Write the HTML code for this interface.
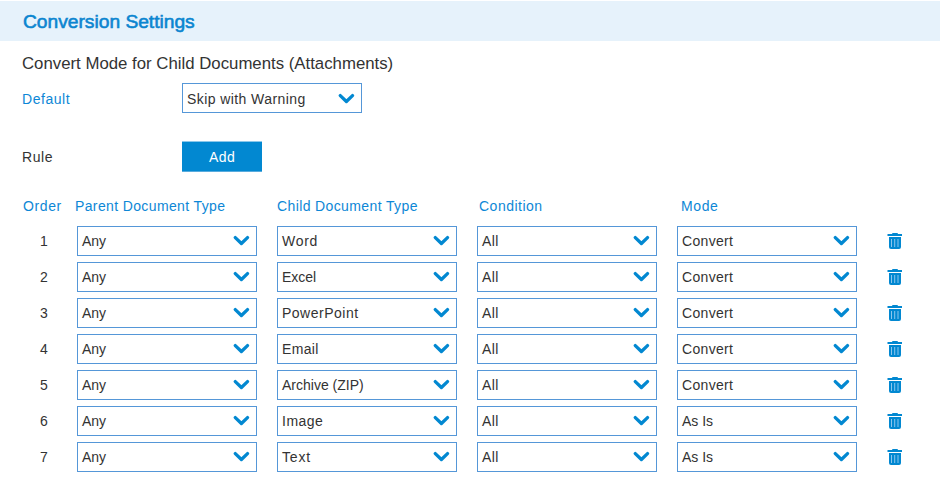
<!DOCTYPE html>
<html><head><meta charset="utf-8">
<style>
html,body{margin:0;padding:0;background:#fff;width:940px;height:478px;overflow:hidden;position:relative;font-family:"Liberation Sans",sans-serif;}
.a{position:absolute;white-space:nowrap;}
.band{position:absolute;left:0;top:1px;width:940px;height:40px;background:#e6f2fb;}
.title{left:23px;top:11px;font-size:19.2px;line-height:22px;font-weight:normal;-webkit-text-stroke:0.6px #0b85d0;color:#0b85d0;}
.sub{left:22px;top:54px;font-size:16.8px;line-height:20px;color:#333;}
.lbl{font-size:14px;line-height:16px;color:#0d87d6;}
.dark{font-size:14px;line-height:16px;color:#333;}
.sel{position:absolute;box-sizing:border-box;width:180px;height:30px;border:1px solid #5597d8;background:#fff;}
.sel span{position:absolute;left:4px;top:6px;font-size:14px;line-height:16px;color:#333;white-space:nowrap;}
.sel svg{position:absolute;left:155px;top:8px;}
.btn{position:absolute;box-sizing:border-box;left:182px;top:141px;width:80px;height:31px;border-top:1px solid #8cc8ea;border-bottom:1px solid #58abdd;background:#0288d1;color:#fff;font-size:14px;line-height:16px;}
.btn span{position:absolute;left:27px;top:7px;letter-spacing:0.5px;}
.num{position:absolute;font-size:14px;line-height:16px;color:#333;width:20px;text-align:center;}
.trash{position:absolute;left:887px;}
</style></head><body>
<div class="band"></div>
<div class="a title">Conversion Settings</div>
<div class="a sub">Convert Mode for Child Documents (Attachments)</div>
<div class="a lbl" style="left:22px;top:91px;letter-spacing:0.55px;">Default</div>
<div class="sel" style="left:182px;top:83px;"><span style="letter-spacing:0.42px;top:7px">Skip with Warning</span><svg style="top:9px" width="20" height="14" viewBox="0 0 20 14"><polyline points="2.3,2.6 8.4,8.5 14.5,2.6" fill="none" stroke="#0288d1" stroke-width="3.3" stroke-linecap="round" stroke-linejoin="round"/></svg></div>
<div class="a dark" style="left:22px;top:149px;letter-spacing:0.6px;">Rule</div>
<div class="btn"><span>Add</span></div>
<div class="a lbl" style="left:23px;top:198px;letter-spacing:0.6px;">Order</div>
<div class="a lbl" style="left:75px;top:198px;letter-spacing:0.37px;">Parent Document Type</div>
<div class="a lbl" style="left:277px;top:198px;letter-spacing:0.38px;">Child Document Type</div>
<div class="a lbl" style="left:479px;top:198px;letter-spacing:0.5px;">Condition</div>
<div class="a lbl" style="left:681px;top:198px;letter-spacing:0.6px;">Mode</div>
<div class="num" style="left:34px;top:233px;">1</div>
<div class="sel" style="left:77px;top:226px;"><span>Any</span><svg width="20" height="14" viewBox="0 0 20 14"><polyline points="2.3,2.6 8.4,8.5 14.5,2.6" fill="none" stroke="#0288d1" stroke-width="3.3" stroke-linecap="round" stroke-linejoin="round"/></svg></div>
<div class="sel" style="left:277px;top:226px;"><span style="letter-spacing:0.7px">Word</span><svg width="20" height="14" viewBox="0 0 20 14"><polyline points="2.3,2.6 8.4,8.5 14.5,2.6" fill="none" stroke="#0288d1" stroke-width="3.3" stroke-linecap="round" stroke-linejoin="round"/></svg></div>
<div class="sel" style="left:477px;top:226px;"><span style="letter-spacing:0.4px">All</span><svg width="20" height="14" viewBox="0 0 20 14"><polyline points="2.3,2.6 8.4,8.5 14.5,2.6" fill="none" stroke="#0288d1" stroke-width="3.3" stroke-linecap="round" stroke-linejoin="round"/></svg></div>
<div class="sel" style="left:677px;top:226px;"><span style="letter-spacing:0.33px">Convert</span><svg width="20" height="14" viewBox="0 0 20 14"><polyline points="2.3,2.6 8.4,8.5 14.5,2.6" fill="none" stroke="#0288d1" stroke-width="3.3" stroke-linecap="round" stroke-linejoin="round"/></svg></div>
<svg class="trash" style="top:233px" width="16" height="17" viewBox="0 0 16 17"><rect x="5" y="0" width="6" height="2" rx="1" fill="#0288d1"/><rect x="0.5" y="1" width="14.5" height="2" fill="#0288d1"/><path d="M2 4 H14 V14 Q14 16 12 16 H4 Q2 16 2 14 Z" fill="#0288d1"/><rect x="4" y="6" width="1" height="8" fill="#8cc6ee"/><rect x="7.2" y="6" width="1" height="8" fill="#8cc6ee"/><rect x="10.5" y="6" width="1" height="8" fill="#8cc6ee"/></svg>
<div class="num" style="left:34px;top:269px;">2</div>
<div class="sel" style="left:77px;top:262px;"><span>Any</span><svg width="20" height="14" viewBox="0 0 20 14"><polyline points="2.3,2.6 8.4,8.5 14.5,2.6" fill="none" stroke="#0288d1" stroke-width="3.3" stroke-linecap="round" stroke-linejoin="round"/></svg></div>
<div class="sel" style="left:277px;top:262px;"><span>Excel</span><svg width="20" height="14" viewBox="0 0 20 14"><polyline points="2.3,2.6 8.4,8.5 14.5,2.6" fill="none" stroke="#0288d1" stroke-width="3.3" stroke-linecap="round" stroke-linejoin="round"/></svg></div>
<div class="sel" style="left:477px;top:262px;"><span style="letter-spacing:0.4px">All</span><svg width="20" height="14" viewBox="0 0 20 14"><polyline points="2.3,2.6 8.4,8.5 14.5,2.6" fill="none" stroke="#0288d1" stroke-width="3.3" stroke-linecap="round" stroke-linejoin="round"/></svg></div>
<div class="sel" style="left:677px;top:262px;"><span style="letter-spacing:0.33px">Convert</span><svg width="20" height="14" viewBox="0 0 20 14"><polyline points="2.3,2.6 8.4,8.5 14.5,2.6" fill="none" stroke="#0288d1" stroke-width="3.3" stroke-linecap="round" stroke-linejoin="round"/></svg></div>
<svg class="trash" style="top:269px" width="16" height="17" viewBox="0 0 16 17"><rect x="5" y="0" width="6" height="2" rx="1" fill="#0288d1"/><rect x="0.5" y="1" width="14.5" height="2" fill="#0288d1"/><path d="M2 4 H14 V14 Q14 16 12 16 H4 Q2 16 2 14 Z" fill="#0288d1"/><rect x="4" y="6" width="1" height="8" fill="#8cc6ee"/><rect x="7.2" y="6" width="1" height="8" fill="#8cc6ee"/><rect x="10.5" y="6" width="1" height="8" fill="#8cc6ee"/></svg>
<div class="num" style="left:34px;top:305px;">3</div>
<div class="sel" style="left:77px;top:298px;"><span>Any</span><svg width="20" height="14" viewBox="0 0 20 14"><polyline points="2.3,2.6 8.4,8.5 14.5,2.6" fill="none" stroke="#0288d1" stroke-width="3.3" stroke-linecap="round" stroke-linejoin="round"/></svg></div>
<div class="sel" style="left:277px;top:298px;"><span style="letter-spacing:0.5px">PowerPoint</span><svg width="20" height="14" viewBox="0 0 20 14"><polyline points="2.3,2.6 8.4,8.5 14.5,2.6" fill="none" stroke="#0288d1" stroke-width="3.3" stroke-linecap="round" stroke-linejoin="round"/></svg></div>
<div class="sel" style="left:477px;top:298px;"><span style="letter-spacing:0.4px">All</span><svg width="20" height="14" viewBox="0 0 20 14"><polyline points="2.3,2.6 8.4,8.5 14.5,2.6" fill="none" stroke="#0288d1" stroke-width="3.3" stroke-linecap="round" stroke-linejoin="round"/></svg></div>
<div class="sel" style="left:677px;top:298px;"><span style="letter-spacing:0.33px">Convert</span><svg width="20" height="14" viewBox="0 0 20 14"><polyline points="2.3,2.6 8.4,8.5 14.5,2.6" fill="none" stroke="#0288d1" stroke-width="3.3" stroke-linecap="round" stroke-linejoin="round"/></svg></div>
<svg class="trash" style="top:305px" width="16" height="17" viewBox="0 0 16 17"><rect x="5" y="0" width="6" height="2" rx="1" fill="#0288d1"/><rect x="0.5" y="1" width="14.5" height="2" fill="#0288d1"/><path d="M2 4 H14 V14 Q14 16 12 16 H4 Q2 16 2 14 Z" fill="#0288d1"/><rect x="4" y="6" width="1" height="8" fill="#8cc6ee"/><rect x="7.2" y="6" width="1" height="8" fill="#8cc6ee"/><rect x="10.5" y="6" width="1" height="8" fill="#8cc6ee"/></svg>
<div class="num" style="left:34px;top:341px;">4</div>
<div class="sel" style="left:77px;top:334px;"><span>Any</span><svg width="20" height="14" viewBox="0 0 20 14"><polyline points="2.3,2.6 8.4,8.5 14.5,2.6" fill="none" stroke="#0288d1" stroke-width="3.3" stroke-linecap="round" stroke-linejoin="round"/></svg></div>
<div class="sel" style="left:277px;top:334px;"><span style="letter-spacing:0.35px">Email</span><svg width="20" height="14" viewBox="0 0 20 14"><polyline points="2.3,2.6 8.4,8.5 14.5,2.6" fill="none" stroke="#0288d1" stroke-width="3.3" stroke-linecap="round" stroke-linejoin="round"/></svg></div>
<div class="sel" style="left:477px;top:334px;"><span style="letter-spacing:0.4px">All</span><svg width="20" height="14" viewBox="0 0 20 14"><polyline points="2.3,2.6 8.4,8.5 14.5,2.6" fill="none" stroke="#0288d1" stroke-width="3.3" stroke-linecap="round" stroke-linejoin="round"/></svg></div>
<div class="sel" style="left:677px;top:334px;"><span style="letter-spacing:0.33px">Convert</span><svg width="20" height="14" viewBox="0 0 20 14"><polyline points="2.3,2.6 8.4,8.5 14.5,2.6" fill="none" stroke="#0288d1" stroke-width="3.3" stroke-linecap="round" stroke-linejoin="round"/></svg></div>
<svg class="trash" style="top:341px" width="16" height="17" viewBox="0 0 16 17"><rect x="5" y="0" width="6" height="2" rx="1" fill="#0288d1"/><rect x="0.5" y="1" width="14.5" height="2" fill="#0288d1"/><path d="M2 4 H14 V14 Q14 16 12 16 H4 Q2 16 2 14 Z" fill="#0288d1"/><rect x="4" y="6" width="1" height="8" fill="#8cc6ee"/><rect x="7.2" y="6" width="1" height="8" fill="#8cc6ee"/><rect x="10.5" y="6" width="1" height="8" fill="#8cc6ee"/></svg>
<div class="num" style="left:34px;top:377px;">5</div>
<div class="sel" style="left:77px;top:370px;"><span>Any</span><svg width="20" height="14" viewBox="0 0 20 14"><polyline points="2.3,2.6 8.4,8.5 14.5,2.6" fill="none" stroke="#0288d1" stroke-width="3.3" stroke-linecap="round" stroke-linejoin="round"/></svg></div>
<div class="sel" style="left:277px;top:370px;"><span>Archive (ZIP)</span><svg width="20" height="14" viewBox="0 0 20 14"><polyline points="2.3,2.6 8.4,8.5 14.5,2.6" fill="none" stroke="#0288d1" stroke-width="3.3" stroke-linecap="round" stroke-linejoin="round"/></svg></div>
<div class="sel" style="left:477px;top:370px;"><span style="letter-spacing:0.4px">All</span><svg width="20" height="14" viewBox="0 0 20 14"><polyline points="2.3,2.6 8.4,8.5 14.5,2.6" fill="none" stroke="#0288d1" stroke-width="3.3" stroke-linecap="round" stroke-linejoin="round"/></svg></div>
<div class="sel" style="left:677px;top:370px;"><span style="letter-spacing:0.33px">Convert</span><svg width="20" height="14" viewBox="0 0 20 14"><polyline points="2.3,2.6 8.4,8.5 14.5,2.6" fill="none" stroke="#0288d1" stroke-width="3.3" stroke-linecap="round" stroke-linejoin="round"/></svg></div>
<svg class="trash" style="top:377px" width="16" height="17" viewBox="0 0 16 17"><rect x="5" y="0" width="6" height="2" rx="1" fill="#0288d1"/><rect x="0.5" y="1" width="14.5" height="2" fill="#0288d1"/><path d="M2 4 H14 V14 Q14 16 12 16 H4 Q2 16 2 14 Z" fill="#0288d1"/><rect x="4" y="6" width="1" height="8" fill="#8cc6ee"/><rect x="7.2" y="6" width="1" height="8" fill="#8cc6ee"/><rect x="10.5" y="6" width="1" height="8" fill="#8cc6ee"/></svg>
<div class="num" style="left:34px;top:413px;">6</div>
<div class="sel" style="left:77px;top:406px;"><span>Any</span><svg width="20" height="14" viewBox="0 0 20 14"><polyline points="2.3,2.6 8.4,8.5 14.5,2.6" fill="none" stroke="#0288d1" stroke-width="3.3" stroke-linecap="round" stroke-linejoin="round"/></svg></div>
<div class="sel" style="left:277px;top:406px;"><span style="letter-spacing:0.5px">Image</span><svg width="20" height="14" viewBox="0 0 20 14"><polyline points="2.3,2.6 8.4,8.5 14.5,2.6" fill="none" stroke="#0288d1" stroke-width="3.3" stroke-linecap="round" stroke-linejoin="round"/></svg></div>
<div class="sel" style="left:477px;top:406px;"><span style="letter-spacing:0.4px">All</span><svg width="20" height="14" viewBox="0 0 20 14"><polyline points="2.3,2.6 8.4,8.5 14.5,2.6" fill="none" stroke="#0288d1" stroke-width="3.3" stroke-linecap="round" stroke-linejoin="round"/></svg></div>
<div class="sel" style="left:677px;top:406px;"><span>As Is</span><svg width="20" height="14" viewBox="0 0 20 14"><polyline points="2.3,2.6 8.4,8.5 14.5,2.6" fill="none" stroke="#0288d1" stroke-width="3.3" stroke-linecap="round" stroke-linejoin="round"/></svg></div>
<svg class="trash" style="top:413px" width="16" height="17" viewBox="0 0 16 17"><rect x="5" y="0" width="6" height="2" rx="1" fill="#0288d1"/><rect x="0.5" y="1" width="14.5" height="2" fill="#0288d1"/><path d="M2 4 H14 V14 Q14 16 12 16 H4 Q2 16 2 14 Z" fill="#0288d1"/><rect x="4" y="6" width="1" height="8" fill="#8cc6ee"/><rect x="7.2" y="6" width="1" height="8" fill="#8cc6ee"/><rect x="10.5" y="6" width="1" height="8" fill="#8cc6ee"/></svg>
<div class="num" style="left:34px;top:449px;">7</div>
<div class="sel" style="left:77px;top:442px;"><span>Any</span><svg width="20" height="14" viewBox="0 0 20 14"><polyline points="2.3,2.6 8.4,8.5 14.5,2.6" fill="none" stroke="#0288d1" stroke-width="3.3" stroke-linecap="round" stroke-linejoin="round"/></svg></div>
<div class="sel" style="left:277px;top:442px;"><span style="letter-spacing:0.8px">Text</span><svg width="20" height="14" viewBox="0 0 20 14"><polyline points="2.3,2.6 8.4,8.5 14.5,2.6" fill="none" stroke="#0288d1" stroke-width="3.3" stroke-linecap="round" stroke-linejoin="round"/></svg></div>
<div class="sel" style="left:477px;top:442px;"><span style="letter-spacing:0.4px">All</span><svg width="20" height="14" viewBox="0 0 20 14"><polyline points="2.3,2.6 8.4,8.5 14.5,2.6" fill="none" stroke="#0288d1" stroke-width="3.3" stroke-linecap="round" stroke-linejoin="round"/></svg></div>
<div class="sel" style="left:677px;top:442px;"><span>As Is</span><svg width="20" height="14" viewBox="0 0 20 14"><polyline points="2.3,2.6 8.4,8.5 14.5,2.6" fill="none" stroke="#0288d1" stroke-width="3.3" stroke-linecap="round" stroke-linejoin="round"/></svg></div>
<svg class="trash" style="top:449px" width="16" height="17" viewBox="0 0 16 17"><rect x="5" y="0" width="6" height="2" rx="1" fill="#0288d1"/><rect x="0.5" y="1" width="14.5" height="2" fill="#0288d1"/><path d="M2 4 H14 V14 Q14 16 12 16 H4 Q2 16 2 14 Z" fill="#0288d1"/><rect x="4" y="6" width="1" height="8" fill="#8cc6ee"/><rect x="7.2" y="6" width="1" height="8" fill="#8cc6ee"/><rect x="10.5" y="6" width="1" height="8" fill="#8cc6ee"/></svg>
</body></html>
